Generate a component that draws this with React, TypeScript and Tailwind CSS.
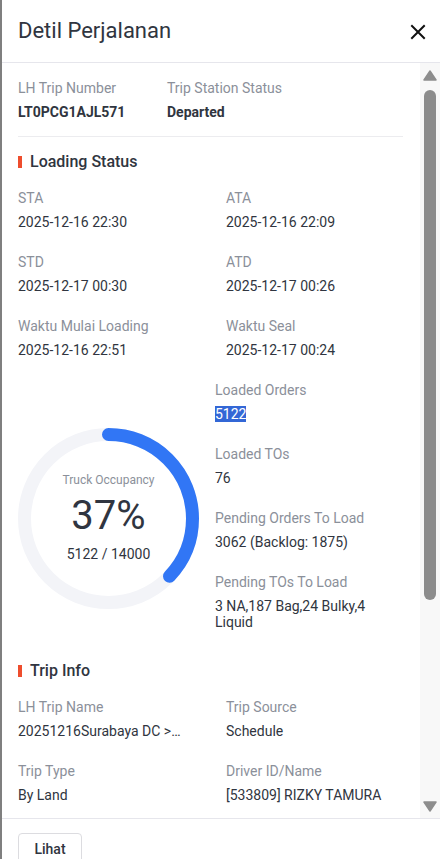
import React from "react";

type Field = { label: string; value: React.ReactNode };

function Item({ label, value }: Field) {
  return (
    <div className="min-w-0">
      <div className="text-[14px] leading-[20px] text-[#8b909a]">{label}</div>
      <div className="mt-[6px] text-[14px] leading-[16px] text-[#303540]">{value}</div>
    </div>
  );
}

function SectionTitle({ children }: { children: React.ReactNode }) {
  return (
    <div className="flex items-center h-[24px]">
      <span className="w-[4px] h-[12px] bg-[#ee4d2d] mr-[8px]" />
      <span className="text-[16px] leading-[24px] font-medium text-[#303540]">{children}</span>
    </div>
  );
}

function Donut({ percent }: { percent: number }) {
  const r = 84;
  const c = 2 * Math.PI * r;
  const dash = (percent / 100) * c;
  return (
    <div className="relative w-[181px] h-[181px]">
      <svg width="181" height="181" viewBox="0 0 181 181" className="absolute inset-0">
        <circle cx="90.5" cy="90.5" r={r} fill="none" stroke="#f3f4f8" strokeWidth="13" />
        <circle
          cx="90.5"
          cy="90.5"
          r={r}
          fill="none"
          stroke="#3176f5"
          strokeWidth="13"
          strokeLinecap="round"
          strokeDasharray={`${dash} ${c}`}
          transform="rotate(-90 90.5 90.5)"
        />
      </svg>
      <div className="absolute inset-0 flex flex-col items-center">
        <div className="mt-[44px] text-[12px] leading-[16px] text-[#8b909a]">Truck Occupancy</div>
        <div className="mt-[6px] text-[40px] leading-[44px] text-[#303540]">37%</div>
        <div className="mt-[7px] text-[14px] leading-[18px] text-[#303540]">5122 / 14000</div>
      </div>
    </div>
  );
}

function FakeScrollbar() {
  return (
    <div className="w-[20px] shrink-0 bg-[#f8f8f8] flex flex-col items-center">
      <svg width="14" height="11" viewBox="0 0 14 11" className="mt-[7px]">
        <path d="M7 1 L13 10 L1 10 Z" fill="#8d8d8d" stroke="#8d8d8d" strokeLinejoin="round" strokeWidth="1.5" />
      </svg>
      <div className="mt-[9px] w-[12px] h-[510px] rounded-full bg-[#8c8c8c]" />
      <div className="flex-1" />
      <svg width="14" height="11" viewBox="0 0 14 11" className="mb-[6px]">
        <path d="M1 1 L13 1 L7 10 Z" fill="#8d8d8d" stroke="#8d8d8d" strokeLinejoin="round" strokeWidth="1.5" />
      </svg>
    </div>
  );
}

export default function App() {
  return (
    <div
      className="w-[440px] h-[859px] bg-white flex overflow-hidden"
      style={{ fontFamily: "Roboto, 'Noto Sans', 'Liberation Sans', sans-serif" }}
    >
      <div className="w-[2px] shrink-0 bg-[#7f7f7f]" />
      <div className="flex-1 flex flex-col min-w-0">
        {/* header */}
        <div className="h-[63px] shrink-0 flex items-center justify-between pl-[16px] pr-[12px] border-b border-[#e6e6ec]">
          <h1 className="text-[22px] leading-[28px] text-[#303540] font-normal">Detil Perjalanan</h1>
          <svg width="16" height="16" viewBox="0 0 16 16" className="mr-[2px] mt-[2px]">
            <path d="M2 2 L14 14 M14 2 L2 14" stroke="#111" strokeWidth="2" strokeLinecap="square" />
          </svg>
        </div>

        {/* body */}
        <div className="flex-1 flex min-h-0 overflow-hidden">
          <div className="flex-1 min-w-0 pl-[16px] pr-[17px] pt-[15px] overflow-hidden">
            <div className="flex pb-[14px] border-b border-[#ececef]">
              <div className="w-[149px]">
                <div className="text-[14px] leading-[20px] text-[#8b909a]">LH Trip Number</div>
                <div className="mt-[4px] text-[14px] leading-[20px] font-bold text-[#303540]">LT0PCG1AJL571</div>
              </div>
              <div>
                <div className="text-[14px] leading-[20px] text-[#8b909a]">Trip Station Status</div>
                <div className="mt-[4px] text-[14px] leading-[20px] font-bold text-[#303540]">Departed</div>
              </div>
            </div>

            <div className="mt-[13px]">
              <SectionTitle>Loading Status</SectionTitle>
              <div className="mt-[14px] grid grid-cols-[208px_1fr] gap-y-[22px]">
                <Item label="STA" value="2025-12-16 22:30" />
                <Item label="ATA" value="2025-12-16 22:09" />
                <Item label="STD" value="2025-12-17 00:30" />
                <Item label="ATD" value="2025-12-17 00:26" />
                <Item label="Waktu Mulai Loading" value="2025-12-16 22:51" />
                <Item label="Waktu Seal" value="2025-12-17 00:24" />
              </div>

              <div className="mt-[22px] flex">
                <div className="w-[197px] shrink-0 pt-[48px]">
                  <Donut percent={37} />
                </div>
                <div className="flex flex-col gap-y-[22px]">
                  <Item
                    label="Loaded Orders"
                    value={<span className="bg-[#3367d6] text-white">5122</span>}
                  />
                  <Item label="Loaded TOs" value="76" />
                  <Item label="Pending Orders To Load" value="3062 (Backlog: 1875)" />
                  <Item label="Pending TOs To Load" value="3 NA,187 Bag,24 Bulky,4 Liquid" />
                </div>
              </div>
            </div>

            <div className="mt-[29px]">
              <SectionTitle>Trip Info</SectionTitle>
              <div className="mt-[14px] grid grid-cols-[208px_1fr] gap-y-[22px]">
                <Item
                  label="LH Trip Name"
                  value={<span className="block truncate w-[164px]">20251216Surabaya DC &gt; Jakarta DC</span>}
                />
                <Item label="Trip Source" value="Schedule" />
                <Item label="Trip Type" value="By Land" />
                <Item label="Driver ID/Name" value="[533809] RIZKY TAMURA" />
                <Item label="Vehicle Number" value="L 9087 UB" />
                <Item label="Vehicle Type" value="Wingbox" />
              </div>
            </div>
          </div>
          <FakeScrollbar />
        </div>

        {/* footer */}
        <div className="h-[41px] shrink-0 border-t border-[#e6e6ec] pl-[16px] pt-[14px]">
          <button className="w-[64px] h-[32px] rounded-[4px] border border-[#dcdce0] bg-white text-[14px] font-medium text-[#303540] leading-[30px]">
            Lihat
          </button>
        </div>
      </div>
    </div>
  );
}
